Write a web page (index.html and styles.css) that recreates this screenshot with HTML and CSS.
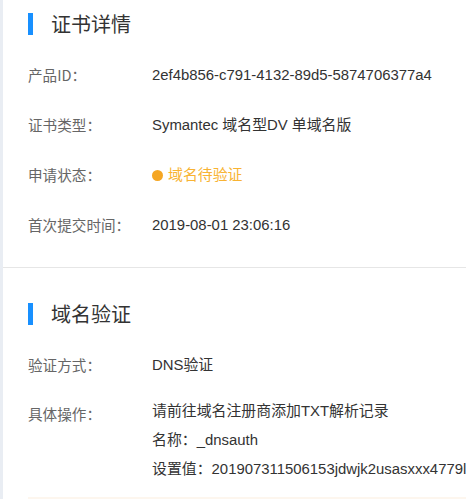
FILE: index.html
```html
<!DOCTYPE html>
<html lang="zh-CN">
<head>
<meta charset="utf-8">
<title>证书详情</title>
<link rel="stylesheet" href="styles.css">
</head>
<body>
<div class="layout">
  <div class="side-strip"></div>
  <main class="main">
    <section class="section section-first">
      <h2 class="section-title">证书详情</h2>
      <div class="row">
        <div class="label">产品ID：</div>
        <div class="value">2ef4b856-c791-4132-89d5-5874706377a4</div>
      </div>
      <div class="row">
        <div class="label">证书类型：</div>
        <div class="value">Symantec 域名型DV 单域名版</div>
      </div>
      <div class="row">
        <div class="label">申请状态：</div>
        <div class="value status"><span class="dot"></span>域名待验证</div>
      </div>
      <div class="row">
        <div class="label">首次提交时间：</div>
        <div class="value">2019-08-01 23:06:16</div>
      </div>
    </section>
    <section class="section section-second">
      <h2 class="section-title">域名验证</h2>
      <div class="row">
        <div class="label">验证方式：</div>
        <div class="value">DNS验证</div>
      </div>
      <div class="row row-multi">
        <div class="label">具体操作：</div>
        <div class="value lines">
          <div class="line">请前往域名注册商添加TXT解析记录</div>
          <div class="line">名称：_dnsauth</div>
          <div class="line">设置值：201907311506153jdwjk2usasxxx4779l</div>
        </div>
      </div>
      <div class="notice"></div>
    </section>
  </main>
</div>
</body>
</html>
```

FILE: styles.css
```css
html, body {
  margin: 0;
  padding: 0;
  background: #ffffff;
}
body {
  font-family: "Liberation Sans", "Noto Sans CJK SC", sans-serif;
  color: #333333;
  width: 466px;
  height: 499px;
  overflow: hidden;
}
.layout {
  display: flex;
  height: 499px;
}
.side-strip {
  width: 3px;
  flex: 0 0 3px;
  background: #e9edf3;
}
.main {
  flex: 1;
  min-width: 0;
  overflow: hidden;
}
.section {
  padding: 0 0 0 25px;
}
.section-first {
  padding-top: 13px;
  padding-bottom: 17px;
  border-bottom: 1px solid #e6e6e6;
}
.section-second {
  padding-top: 35px;
}
.section-title {
  margin: 0 0 15px 0;
  height: 22px;
  line-height: 22px;
  font-size: 20px;
  font-weight: normal;
  color: #333333;
  border-left: 5px solid #1890ff;
  padding-left: 18px;
  font-family: "Noto Sans CJK SC", sans-serif;
}
.row {
  display: flex;
  padding: 15px 0;
  line-height: 20px;
  font-size: 14.9px;
}
.label {
  width: 124px;
  flex: 0 0 124px;
  color: #666666;
  font-family: "Noto Sans CJK SC", sans-serif;
  font-size: 14.6px;
}
.value {
  white-space: nowrap;
  color: #333333;
}
.status {
  color: #f8b333;
  display: flex;
  align-items: center;
}
.dot {
  width: 11px;
  height: 11px;
  border-radius: 50%;
  background: #f5a623;
  margin-right: 5px;
}
.row-multi {
  padding-top: 7px;
  padding-bottom: 0;
}
.row-multi .label {
  padding-top: 7px;
}
.lines .line {
  line-height: 29px;
}
.notice {
  margin-top: 13px;
  height: 20px;
  background: #fdf6ee;
}
```
